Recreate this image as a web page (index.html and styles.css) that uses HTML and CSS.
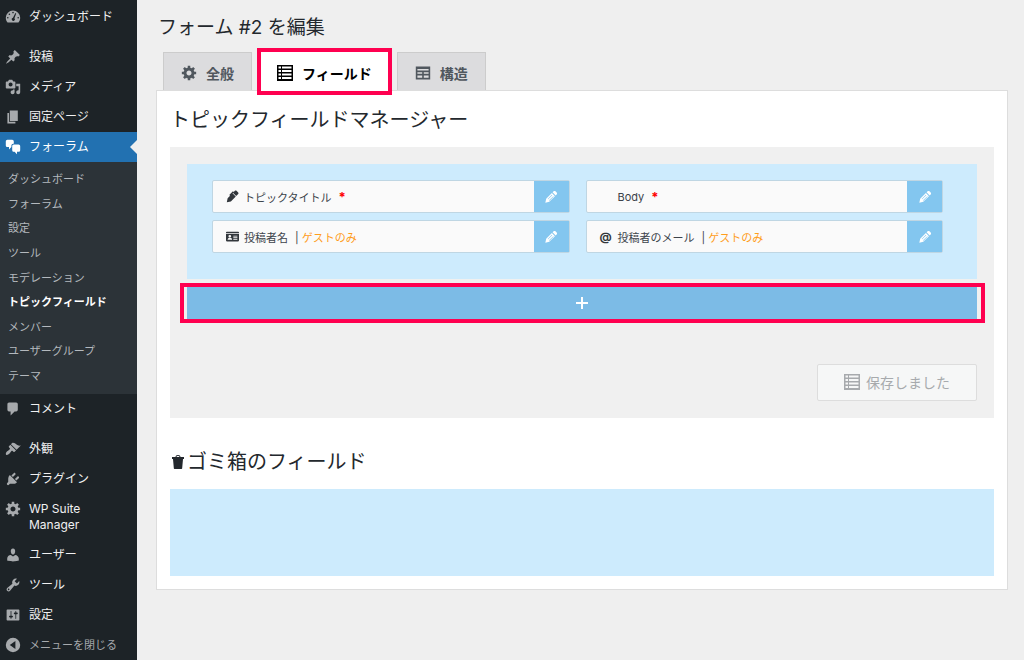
FILE: index.html
```html
<!DOCTYPE html>
<html lang="ja">
<head>
    <meta charset="UTF-8">
    <meta name="viewport" content="width=device-width, initial-scale=1.0">
    <link rel="stylesheet" href="styles.css">
    <title>フォーム #2 を編集</title>
</head>
<body>

  <!-- shared icons -->
  <svg class="sprite" aria-hidden="true">
    <symbol id="gear" viewBox="0 1 19 19">
      <path fill-rule="evenodd" d="M18 12h-2.18c-.17.7-.44 1.35-.81 1.93l1.54 1.54-2.1 2.1-1.54-1.54c-.58.36-1.23.63-1.91.79V19H8v-2.18c-.68-.16-1.33-.43-1.91-.79l-1.54 1.54-2.12-2.12 1.54-1.54c-.36-.58-.63-1.23-.79-1.91H1V9.03h2.17c.16-.7.44-1.35.8-1.94L2.43 5.55l2.1-2.1 1.54 1.54c.58-.37 1.24-.64 1.93-.81V2h3v2.18c.68.16 1.33.43 1.91.79l1.54-1.54 2.12 2.12-1.54 1.54c.36.59.64 1.24.8 1.94H18V12zm-8.5 1.5c1.66 0 3-1.34 3-3s-1.34-3-3-3-3 1.34-3 3 1.34 3 3 3z"/>
    </symbol>
    <symbol id="rows" viewBox="0 0 16 16">
      <path fill-rule="evenodd" d="M0 0h16v16H0zM1.500 1.500v2H4v-2zM5 1.500v2h9.500v-2zM1.500 5v2H4V5zM5 5v2h9.500V5zM1.500 8.500v2H4v-2zM5 8.500v2h9.500v-2zM1.500 12v2H4v-2zM5 12v2h9.500v-2z"/>
    </symbol>
    <symbol id="pencil" viewBox="0 0 16 16">
      <path fill-rule="evenodd" d="M1.500 14.500l1-4.500L9 3.500 12.500 7 6 13.500zM9.800 2.700L11 1.500c.6-.6 1.500-.6 2.100 0l1.400 1.400c.6.6.6 1.500 0 2.100l-1.200 1.200zM4.200 10.200l.5.5 4.800-4.800-.5-.5zM5.800 11.800l.5.5 4.800-4.800-.5-.5z"/>
    </symbol>
  </svg>

  <nav class="sidebar">
    <ul class="menu">
      <li><a href="#">
        <svg class="icon" viewBox="0 0 20 20"><path fill-rule="evenodd" d="M3.200 17h13.600c1.300-1.500 2.200-3.600 2.200-6a9 9 0 0 0-18 0c0 2.400.900 4.500 2.200 6zM9 4.500a1 1 0 1 0 2 0 1 1 0 0 0-2 0zM4.500 6.500a1 1 0 1 0 2 0 1 1 0 0 0-2 0zM2.500 11a1 1 0 1 0 2 0 1 1 0 0 0-2 0zM15.500 11a1 1 0 1 0 2 0 1 1 0 0 0-2 0zM14 5.500l-2.200 6a2 2 0 1 1-1.800-.6l3-6z"/></svg>
        ダッシュボード</a></li>
      <li class="separator"></li>
      <li><a href="#">
        <svg class="icon" viewBox="0 0 20 20"><path d="M10.44 3.02l1.82-1.82 6.36 6.35-1.83 1.82c-1.05-.68-2.48-.57-3.41.36l-.75.75c-.92.93-1.04 2.35-.35 3.41l-1.83 1.82-2.41-2.41-2.8 2.79c-.42.42-3.38 2.71-3.8 2.29s1.86-3.39 2.28-3.81l2.79-2.79L4.1 9.36l1.83-1.82c1.05.69 2.48.57 3.4-.36l.75-.75c.93-.92 1.05-2.35.36-3.41z"/></svg>
        投稿</a></li>
      <li><a href="#">
        <svg class="icon" viewBox="0 0 20 20"><path fill-rule="evenodd" d="M13 11V4c0-.55-.45-1-1-1h-1.67L9 1H5L3.67 3H2c-.55 0-1 .45-1 1v7c0 .55.45 1 1 1h10c.55 0 1-.45 1-1zM7 4.5c1.38 0 2.5 1.12 2.5 2.5S8.38 9.5 7 9.5 4.5 8.38 4.5 7 5.62 4.5 7 4.5zM14 6h5v10.5c0 1.38-1.12 2.5-2.5 2.5S14 17.88 14 16.5s1.12-2.5 2.5-2.5c.17 0 .34.02.5.05V9h-3V6zm-4 8.05V13h2v3.5c0 1.38-1.12 2.5-2.5 2.5S7 17.88 7 16.5 8.12 14 9.5 14c.17 0 .34.02.5.05z"/></svg>
        メディア</a></li>
      <li><a href="#">
        <svg class="icon" viewBox="0 0 20 20"><path d="M6 15V2h10v13H6zm-1 1h8v2H3V5h2v11z"/></svg>
        固定ページ</a></li>
      <li class="current"><a href="#">
        <svg class="icon" viewBox="0 0 20 20"><path d="M11 6h-.82C9.07 6 8 7.2 8 8.16V10l-3 3v-3H3c-1.1 0-2-.9-2-2V3c0-1.1.9-2 2-2h6c1.1 0 2 .9 2 2v3zm0 1h6c1.1 0 2 .9 2 2v5c0 1.1-.9 2-2 2h-2v3l-3-3h-1c-1.1 0-2-.9-2-2V9c0-1.1.9-2 2-2z"/></svg>
        フォーラム</a>
        <ul class="submenu">
          <li><a href="#">ダッシュボード</a></li>
          <li><a href="#">フォーラム</a></li>
          <li><a href="#">設定</a></li>
          <li><a href="#">ツール</a></li>
          <li><a href="#">モデレーション</a></li>
          <li><a href="#" class="active">トピックフィールド</a></li>
          <li><a href="#">メンバー</a></li>
          <li><a href="#">ユーザーグループ</a></li>
          <li><a href="#">テーマ</a></li>
        </ul>
      </li>
      <li><a href="#">
        <svg class="icon" viewBox="0 0 20 20"><path d="M5 2h9c1.100 0 2 .9 2 2v7c0 1.100-.9 2-2 2h-2l-5 5v-5H5c-1.100 0-2-.9-2-2V4c0-1.100.9-2 2-2z"/></svg>
        コメント</a></li>
      <li class="separator"></li>
      <li><a href="#">
        <svg class="icon" viewBox="0 0 20 20"><path d="M14.480 11.060L7.410 3.990l1.500-1.500c.5-.56 2.300-.47 3.510.32 1.210.8 1.430 1.280 2.910 2.100 1.180.64 2.450 1.260 4.450.85zm-.71.71L6.700 4.700 4.930 6.470c-.39.39-.39 1.020 0 1.410l1.060 1.060c.39.39.39 1.030 0 1.420-.6.6-1.430 1.110-2.210 1.690-.35.26-.7.53-1.010.84C1.430 14.230.4 16.080 1.400 17.070c.99 1 2.840-.03 4.180-1.360.31-.31.58-.66.85-1.020.57-.78 1.080-1.610 1.690-2.210.39-.39 1.020-.39 1.410 0l1.060 1.060c.39.39 1.020.39 1.410 0z"/></svg>
        外観</a></li>
      <li><a href="#">
        <svg class="icon" viewBox="0 0 20 20"><path d="M13.110 4.360L9.870 7.600 8 5.730l3.240-3.240c.35-.34 1.050-.2 1.560.32.52.51.66 1.210.31 1.550zm-8 1.770l.91-1.120 9.010 9.010-1.190.84c-.71.71-2.630 1.160-3.820 1.160H6.140L4.900 17.260c-.59.59-1.540.59-2.120 0-.59-.58-.59-1.530 0-2.120l1.240-1.240v-3.880c0-1.130.4-3.190 1.090-3.890zm7.260 3.970l3.240-3.240c.34-.35 1.040-.21 1.550.31.52.51.66 1.210.31 1.550l-3.240 3.250z"/></svg>
        プラグイン</a></li>
      <li><a href="#">
        <svg class="icon"><use href="#gear"/></svg>
        WP Suite Manager</a></li>
      <li><a href="#">
        <svg class="icon" viewBox="0 0 20 20"><path d="M10 9.250c-2.270 0-2.730-3.440-2.730-3.440C7 4.020 7.820 2 9.970 2c2.160 0 2.980 2.020 2.710 3.810 0 0-.41 3.440-2.680 3.440zm0 2.570L12.720 10c2.390 0 4.520 2.330 4.520 4.530v2.490s-3.650 1.130-7.240 1.130c-3.650 0-7.240-1.130-7.240-1.130v-2.490c0-2.250 1.940-4.480 4.470-4.480z"/></svg>
        ユーザー</a></li>
      <li><a href="#">
        <svg class="icon" viewBox="0 0 20 20"><path fill-rule="evenodd" d="M16.680 9.770c-1.340 1.340-3.300 1.670-4.950.99l-5.410 6.520c-.99.99-2.590.99-3.580 0s-.99-2.590 0-3.570l6.520-5.420c-.68-1.650-.35-3.610.99-4.950 1.280-1.280 3.120-1.620 4.720-1.060l-2.890 2.890 2.820 2.820 2.860-2.870c.53 1.580.18 3.390-1.080 4.650zM3.810 16.210c.4.39 1.040.39 1.430 0 .4-.4.4-1.040 0-1.430-.39-.4-1.030-.4-1.430 0-.39.39-.39 1.030 0 1.430z"/></svg>
        ツール</a></li>
      <li><a href="#">
        <svg class="icon" viewBox="0 0 20 20"><path fill-rule="evenodd" d="M18 16V4c0-.55-.45-1-1-1H3c-.55 0-1 .45-1 1v12c0 .55.45 1 1 1h14c.55 0 1-.45 1-1zM8 11h1c.55 0 1 .45 1 1s-.45 1-1 1H8v1.500c0 .28-.22.5-.5.5s-.5-.22-.5-.5V13H6c-.55 0-1-.45-1-1s.45-1 1-1h1V5.500c0-.28.22-.5.5-.5s.5.22.5.5V11zm5-2h-1c-.55 0-1-.45-1-1s.45-1 1-1h1V5.500c0-.28.22-.5.5-.5s.5.22.5.5V7h1c.55 0 1 .45 1 1s-.45 1-1 1h-1v5.500c0 .28-.22.5-.5.5s-.5-.22-.5-.5V9z"/></svg>
        設定</a></li>
      <li><button type="button" class="collapse">
        <svg class="icon" viewBox="0 0 20 20"><path fill-rule="evenodd" d="M10 1a9 9 0 1 0 0 18 9 9 0 0 0 0-18zM13 5v10l-7-5z"/></svg>
        メニューを閉じる</button></li>
    </ul>
  </nav>

  <main class="content">
    <h1>フォーム #2 を編集</h1>
    <div class="tabs">
      <a href="#" class="tab"><svg class="tabIcon"><use href="#gear"/></svg>全般</a>
      <a href="#" class="tab selected marked"><svg class="tabIcon"><use href="#rows"/></svg>フィールド</a>
      <a href="#" class="tab">
        <svg class="tabIcon" viewBox="0 0 20 20"><path fill-rule="evenodd" d="M19 18V2H1v16h18zM17 7H3V5h14v2zM9 11H3V9h6v2zM17 11h-6V9h6v2zM9 16H3v-3h6v3zM17 16h-6v-3h6v3z"/></svg>構造</a>
    </div>

    <div class="panel">
      <h2>トピックフィールドマネージャー</h2>
      <div class="builder">
        <div class="fields">
          <div class="field">
            <div class="label">
              <svg class="fieldIcon" viewBox="0 0 16 16"><path fill-rule="evenodd" d="M1 15l1-5 6-6 4 4-6 6zM8.500 3.500L11 1c.6-.6 1.300-.6 1.900 0L15 3c.6.6.6 1.300 0 1.900L12.500 7.500zM4 6l4.500-4.500 1 1L5 7z"/></svg>
              <span>トピックタイトル</span><b class="required">*</b>
            </div>
            <button type="button" class="edit" aria-label="編集"><svg><use href="#pencil"/></svg></button>
          </div>
          <div class="field">
            <div class="label">
              <span class="fieldIcon"></span>
              <span>Body</span><b class="required">*</b>
            </div>
            <button type="button" class="edit" aria-label="編集"><svg><use href="#pencil"/></svg></button>
          </div>
          <div class="field">
            <div class="label">
              <svg class="fieldIcon" viewBox="0 0 16 16"><path fill-rule="evenodd" d="M1 2h14c.6 0 1 .4 1 1v1H0V3c0-.6.400-1 1-1zM0 5h16v8c0 .6-.4 1-1 1H1c-.6 0-1-.4-1-1zM3 7.700a1.700 1.700 0 1 0 3.400 0 1.700 1.700 0 0 0-3.400 0zM2 12h5.500c0-1.500-.8-2.200-1.800-2.200H3.800C2.800 9.800 2 10.500 2 12zM9 7v1h5V7zM9 9v1h5V9zM9 11v1h5v-1z"/></svg>
              <span>投稿者名</span><span class="guest">| <em>ゲストのみ</em></span>
            </div>
            <button type="button" class="edit" aria-label="編集"><svg><use href="#pencil"/></svg></button>
          </div>
          <div class="field">
            <div class="label">
              <b class="fieldIcon">@</b>
              <span>投稿者のメール</span><span class="guest">| <em>ゲストのみ</em></span>
            </div>
            <button type="button" class="edit" aria-label="編集"><svg><use href="#pencil"/></svg></button>
          </div>
        </div>
        <div class="addRow marked">
          <button type="button" class="add" aria-label="追加">
            <svg viewBox="0 0 12 12"><path d="M5 0h2v5h5v2H7v5H5V7H0V5h5z"/></svg>
          </button>
        </div>
        <button type="button" class="save" disabled><svg class="tabIcon"><use href="#rows"/></svg>保存しました</button>
      </div>

      <h2 class="trashTitle">
        <svg viewBox="0 0 12 14"><path fill-rule="evenodd" d="M0 2h3.500C3.500.7 4.500 0 6 0s2.500.7 2.500 2H12v2H0zM4.500 2h3c0-.7-.6-1-1.500-1s-1.500.3-1.500 1zM1 4h10l-.8 9c0 .6-.4 1-1 1H2.800c-.6 0-1-.4-1-1z"/></svg>
        ゴミ箱のフィールド
      </h2>
      <div class="trash"></div>
    </div>
  </main>
</body>
</html>
```

FILE: styles.css
```css
* {
  box-sizing: border-box;
}

body {
  margin: 0;
  display: flex;
  min-height: 100vh;
  background: #efefef;
  color: #23282d;
  font-family: Inter, "Noto Sans CJK JP", sans-serif;
  font-size: 12px;
}

.sprite {
  display: none;
}

svg {
  fill: currentColor;
  flex: none;
}

ul {
  list-style: none;
  margin: 0;
  padding: 0;
}

a {
  text-decoration: none;
}

button {
  font-family: inherit;
  border: 0;
  cursor: pointer;
}

/* sidebar */
.sidebar {
  flex: none;
  width: 137px;
  background: #1d2327;
}

.menu {
  padding-top: 2px;
}

.menu > li > a, .collapse {
  display: flex;
  width: 100%;
  min-height: 30px;
  padding: 7px 20px 7px 5px;
  gap: 8px;
  line-height: 16px;
  color: #f0f0f1;
}

.separator {
  height: 10px;
}

.icon {
  width: 16px;
  height: 16px;
  color: #a7aaad;
}

.menu > .current > a {
  position: relative;
  background: #2271b1;
  color: white;
}

.current .icon {
  color: white;
}

.current > a::after {
  content: "";
  position: absolute;
  right: 0;
  top: 8px;
  border: 7px solid transparent;
  border-left: 0;
  border-right-color: #efefef;
}

.submenu {
  display: flex;
  flex-direction: column;
  justify-content: space-between;
  min-height: 232px;
  padding: 5px 8px 6px;
  background: #2c3338;
}

.submenu a {
  display: block;
  font-size: 11px;
  line-height: 24px;
  color: #b4b9be;
}

.submenu .active {
  color: white;
  font-weight: bold;
}

.menu > li > .collapse {
  background: none;
  padding-right: 0;
  font-size: 11px;
  color: #a7aaad;
}

/* main column */
.content {
  flex: 1;
  min-width: 0;
  padding: 13px 16px 0 19px;
}

h1, h2 {
  margin: 0;
  font-weight: normal;
}

h1 {
  padding-left: 2px;
  font-size: 19px;
  line-height: 30px;
}

h2 {
  padding: 15px 0 13px;
  font-size: 20px;
  line-height: 28px;
}

.tabs {
  display: flex;
  gap: 9px;
  margin-top: 9px;
  padding-left: 7px;
}

.tab {
  display: flex;
  align-items: center;
  gap: 9px;
  height: 38px;
  padding: 2px 17px 0;
  border: 1px solid #ccc;
  border-bottom: 0;
  background: #dcdcde;
  color: #50575e;
  font-size: 14px;
  font-weight: bold;
}

.tab.selected {
  position: relative;
  height: 39px;
  margin-bottom: -1px;
  padding: 2px 15px 0;
  border-color: white;
  background: white;
  color: black;
}

.marked {
  outline: 4px solid #ff0050;
}

.tabIcon {
  width: 16px;
  height: 16px;
}

.panel {
  padding: 0 13px 13px;
  border: 1px solid #ddd;
  background: white;
}

.builder {
  display: flex;
  flex-direction: column;
  padding: 17px;
  background: #f0f0f0;
}

.fields {
  display: grid;
  grid-template-columns: 1fr 1fr;
  gap: 7px 16px;
  padding: 16px 34px 26px 25px;
  background: #cdebfd;
}

.field {
  display: flex;
  height: 33px;
  border: 1px solid #bfd6e3;
  border-radius: 2px;
  background: #fafafa;
}

.label {
  flex: 1;
  display: flex;
  align-items: center;
  gap: 5px;
  padding-left: 13px;
  font-size: 11px;
  color: #3c434a;
}

.fieldIcon {
  width: 13px;
  height: 13px;
  line-height: 13px;
  color: #32373c;
  font-size: 12px;
}

.required {
  padding-left: 2px;
  color: red;
  font-size: 13px;
}

.guest {
  padding-left: 2px;
}

.guest em {
  color: #ff9d1c;
  font-style: normal;
}

.edit {
  display: flex;
  align-items: center;
  justify-content: center;
  width: 35px;
  padding: 0;
  background: #83c6ef;
  color: white;
}

.edit svg {
  width: 14px;
  height: 14px;
}

.addRow {
  margin: 8px -4px 0 -3px;
  padding: 0 4px 0 3px;
}

.add {
  display: flex;
  align-items: center;
  justify-content: center;
  width: 100%;
  height: 32px;
  background: #7cbbe6;
  color: white;
}

.add svg {
  width: 12px;
  height: 12px;
}

.save {
  display: flex;
  align-items: center;
  align-self: flex-end;
  gap: 6px;
  height: 37px;
  margin-top: 45px;
  padding: 0 26px 2px;
  border: 1px solid #ddd;
  border-radius: 2px;
  background: #f6f7f7;
  color: #a7aaad;
  font-size: 14px;
}

.trashTitle {
  display: flex;
  align-items: center;
  gap: 3px;
  padding: 30px 0 13px 2px;
}

.trashTitle svg {
  width: 12px;
  height: 14px;
}

.trash {
  height: 87px;
  background: #cdebfd;
}
```
